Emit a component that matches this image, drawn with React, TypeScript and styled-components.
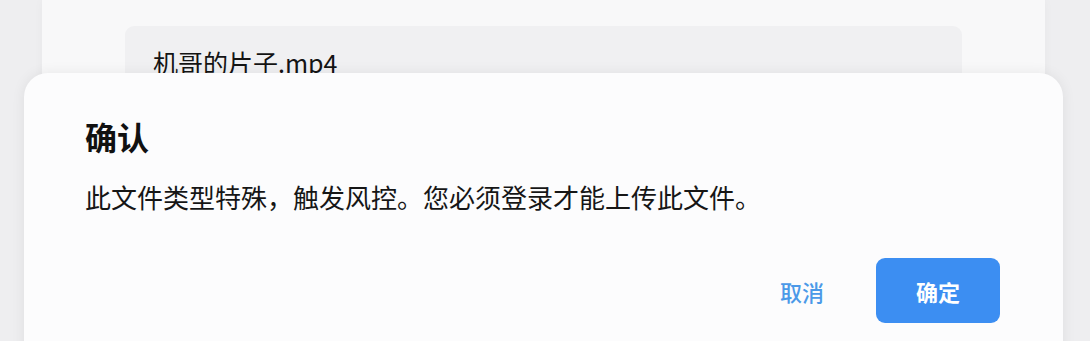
import React from "react";
import styled, { createGlobalStyle } from "styled-components";

const Global = createGlobalStyle`
  html, body { margin: 0; padding: 0; }
  body {
    background: #efeff1;
    font-family: "Noto Sans CJK SC", "Noto Sans", sans-serif;
    -webkit-font-smoothing: antialiased;
  }
`;

const Page = styled.div`
  position: relative;
  width: 1090px;
  height: 341px;
  overflow: hidden;
  background: #eeeef0;
  display: flex;
  justify-content: flex-start;
`;

const BackCard = styled.div`
  margin-left: 42px;
  width: 1003px;
  height: 341px;
  background: #f8f8f9;
  box-sizing: border-box;
  padding: 26px 83px 0;
  box-shadow: 0 0 10px rgba(0, 0, 0, 0.03);
`;

const FileBox = styled.div`
  height: 120px;
  border-radius: 9px;
  background: #f0f0f2;
  padding: 24px 28px 0;
  box-sizing: border-box;
`;

const FileName = styled.div`
  font-size: 25px;
  line-height: 1;
  color: #141414;
`;

const Dialog = styled.div`
  position: absolute;
  left: 24px;
  top: 73px;
  width: 1039px;
  height: 320px;
  box-sizing: border-box;
  padding: 47px 63px 0 61px;
  background: #fcfcfd;
  border-radius: 24px;
  box-shadow: 0 0 14px rgba(0, 0, 0, 0.07);
  display: flex;
  flex-direction: column;
`;

const Title = styled.h2`
  margin: 0;
  font-size: 32px;
  line-height: 1;
  font-weight: 700;
  color: #111;
`;

const Message = styled.p`
  margin: 32px 0 0;
  font-size: 26px;
  line-height: 1;
  font-weight: 400;
  color: #161616;
`;

const Actions = styled.div`
  margin-top: 48px;
  display: flex;
  justify-content: flex-end;
  align-items: center;
  gap: 34px;
`;

const Button = styled.button<{ $primary?: boolean }>`
  border: none;
  outline: none;
  font-family: inherit;
  font-size: 22px;
  line-height: 1;
  height: 65px;
  border-radius: 9px;
  cursor: pointer;
  padding: 0;
  width: ${(p) => (p.$primary ? "124px" : "80px")};
  font-weight: ${(p) => (p.$primary ? 700 : 500)};
  background: ${(p) => (p.$primary ? "#3c8ef2" : "transparent")};
  color: ${(p) => (p.$primary ? "#ffffff" : "#4b99e8")};
`;

export default function App() {
  return (
    <>
      <Global />
      <Page>
        <BackCard>
          <FileBox>
            <FileName>机哥的片子.mp4</FileName>
          </FileBox>
        </BackCard>
        <Dialog>
          <Title>确认</Title>
          <Message>此文件类型特殊，触发风控。您必须登录才能上传此文件。</Message>
          <Actions>
            <Button>取消</Button>
            <Button $primary>确定</Button>
          </Actions>
        </Dialog>
      </Page>
    </>
  );
}
